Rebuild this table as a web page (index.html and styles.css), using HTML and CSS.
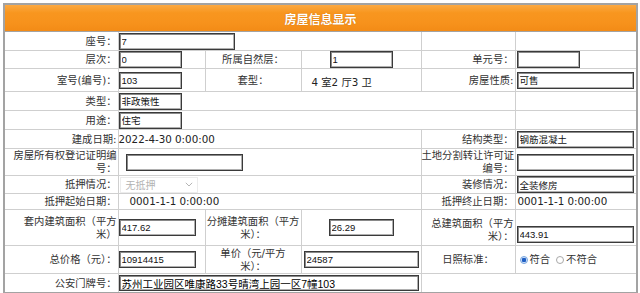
FILE: index.html
```html
<!DOCTYPE html>
<html lang="zh-CN">
<head>
<meta charset="utf-8">
<title>房屋信息显示</title>
<link rel="stylesheet" href="styles.css">
</head>
<body>
<div class="page">
<table class="info">
<colgroup>
<col class="c-a"><col class="c-b"><col class="c-c"><col class="c-d"><col class="c-e"><col class="c-f">
</colgroup>
<tr class="r-head"><th colspan="6"><span class="title">房屋信息显示</span></th></tr>
<tr class="h20">
  <td class="lbl">座号：</td>
  <td colspan="3" class="val"><input class="inp w116" value="7" readonly></td>
  <td></td><td></td>
</tr>
<tr class="h19">
  <td class="lbl">层次：</td>
  <td class="val"><input class="inp w63" value="0" readonly></td>
  <td class="mid">所属自然层：</td>
  <td class="mid"><input class="inp w63" value="1" readonly></td>
  <td class="lbl">单元号：</td>
  <td class="val"><input class="inp w63 ml1" value="" readonly></td>
</tr>
<tr class="h19">
  <td class="lbl">室号(编号)：</td>
  <td class="val"><input class="inp w63" value="103" readonly></td>
  <td class="mid">套型：</td>
  <td class="val txt-low">4 室2 厅3 卫</td>
  <td class="lbl">房屋性质:</td>
  <td class="val"><input class="inp w117 ml1" value="可售" readonly></td>
</tr>
<tr class="h20">
  <td class="lbl">类型：</td>
  <td colspan="4" class="val"><input class="inp w63" value="非政策性" readonly></td>
  <td></td>
</tr>
<tr class="h20">
  <td class="lbl">用途：</td>
  <td colspan="4" class="val"><input class="inp w63" value="住宅" readonly></td>
  <td></td>
</tr>
<tr class="h20">
  <td class="lbl tight">建成日期:</td>
  <td colspan="3" class="val">2022-4-30 0:00:00</td>
  <td class="lbl">结构类型：</td>
  <td class="val"><input class="inp w117 ml1" value="钢筋混凝土" readonly></td>
</tr>
<tr class="h27">
  <td class="lbl">房屋所有权登记证明编<br>号：</td>
  <td colspan="3" class="val"><input class="inp w117 ml7" value="" readonly></td>
  <td class="lbl">土地分割转让许可证<br>编号：</td>
  <td class="val"><input class="inp w117 ml1" value="" readonly></td>
</tr>
<tr class="h19">
  <td class="lbl">抵押情况：</td>
  <td colspan="3" class="val">
    <div class="sel-dis"><span>无抵押</span>
      <svg class="chev" viewBox="0 0 8 5" width="8" height="5"><path d="M0.8 0.8 L4 4 L7.2 0.8" fill="none" stroke="#b5b5b5" stroke-width="1"/></svg>
    </div>
  </td>
  <td class="lbl">装修情况：</td>
  <td class="val"><input class="inp w117 ml1" value="全装修房" readonly></td>
</tr>
<tr class="h17">
  <td class="lbl">抵押起始日期：</td>
  <td colspan="3" class="val pl11">0001-1-1 0:00:00</td>
  <td class="lbl">抵押终止日期：</td>
  <td class="val pl2">0001-1-1 0:00:00</td>
</tr>
<tr class="h33">
  <td class="lbl">套内建筑面积（平方<br>米）</td>
  <td class="val"><input class="inp w77" value="417.62" readonly></td>
  <td class="mid">分摊建筑面积（平方<br>米）：</td>
  <td class="mid"><input class="inp w65" value="26.29" readonly></td>
  <td class="lbl low">总建筑面积（平方<br>米）：</td>
  <td class="val bottom"><input class="inp w117 ml1" value="443.91" readonly></td>
</tr>
<tr class="h29">
  <td class="lbl">总价格（元）：</td>
  <td class="val"><input class="inp w77" value="10914415" readonly></td>
  <td class="mid">单价（元/平方<br>米）：</td>
  <td class="val"><input class="inp w115 ml2" value="24587" readonly></td>
  <td class="mid">日照标准：</td>
  <td class="val">
    <div class="radios">
      <span class="radio on"></span><span class="rtxt">符合</span>
      <span class="radio"></span><span class="rtxt">不符合</span>
    </div>
  </td>
</tr>
<tr class="h20">
  <td class="lbl">公安门牌号：</td>
  <td colspan="3" class="val"><input class="inp w300 big" value="苏州工业园区唯康路33号晴湾上园一区7幢103" readonly></td>
  <td colspan="2"></td>
</tr>
</table>
</div>
</body>
</html>
```

FILE: styles.css
```css
html, body {
  margin: 0;
  padding: 0;
  background: #ffffff;
}
body {
  font-family: "DejaVu Sans", "Noto Sans CJK SC", sans-serif;
  font-size: 10.3px;
  color: #333333;
}
.page {
  padding: 3px 0 0 3px;
}
.info {
  border-collapse: collapse;
  table-layout: fixed;
  width: 633px;
  border: 2px solid #a3a3a3;
}
.c-a { width: 114px; }
.c-b { width: 87px; }
.c-c { width: 96px; }
.c-d { width: 120px; }
.c-e { width: 94px; }
.c-f { width: 122px; }

.r-head th {
  height: 26px;
  padding: 0;
  border: 1px solid #a3a3a3;
  background: linear-gradient(#fca942 0%, #f8961f 30%, #f7921c 70%, #f38b16 100%);
  text-align: center;
  vertical-align: middle;
}
.title {
  color: #ffffff;
  font-family: "Noto Sans CJK SC", sans-serif;
  font-size: 12px;
  font-weight: bold;
  text-shadow: 0 0 1px rgba(160, 80, 0, 0.6);
}

.info td {
  border: 1px solid #cfcfcf;
  padding: 0;
  line-height: 13px;
  vertical-align: middle;
  white-space: nowrap;
}
.h17 td { height: 15px; }
.h19 td { height: 17px; }
.h20 td { height: 18px; }
.h27 td { height: 25px; }
.h29 td { height: 27px; }
.h33 td { height: 31px; }

.info td.lbl {
  text-align: right;
  padding-right: 1px;
}
.info td.tight { padding-right: 1px; }
.info td.mid { text-align: center; }
.info td.val { text-align: left; color: #222222; }
.info td.pl11 { padding-left: 11px; }
.info td.pl2 { padding-left: 2px; }
.info td.txt-low { padding-left: 10px; padding-top: 5px; }
.info td.low { padding-top: 4px; }
.info td.bottom { vertical-align: bottom; padding-bottom: 2px; }

.inp {
  display: block;
  box-sizing: border-box;
  height: 17px;
  margin: 0;
  padding: 0 2px;
  border: 1px solid #3a3a3a;
  box-shadow: inset 1px 1px 0 #8a8a8a, inset -1px -1px 0 #b0b0b0;
  background: #ffffff;
  font-family: "Liberation Sans", "Noto Sans CJK SC", sans-serif;
  font-size: 9.5px;
  color: #111111;
  outline: none;
}
.mid .inp { margin: 0 auto; }
.inp.big { font-size: 10.5px; height: 16px; color: #000000; }
.w63 { width: 63px; }
.w65 { width: 65px; }
.w77 { width: 77px; }
.w115 { width: 115px; }
.w116 { width: 116px; }
.w117 { width: 117px; }
.w300 { width: 300px; }
.ml1 { margin-left: 1px; }
.ml2 { margin-left: 2px; }
.ml7 { margin-left: 7px; }
.mid .inp.w63 { margin: 0 auto; }

.sel-dis {
  box-sizing: border-box;
  width: 78px;
  height: 16px;
  margin-left: 1px;
  padding: 0 4px 0 5px;
  display: flex;
  align-items: center;
  justify-content: space-between;
  border: 1px solid #ececec;
  color: #b3b3b3;
  font-size: 10px;
  font-family: "Noto Sans CJK SC", sans-serif;
}
.chev { display: block; }

.radios {
  display: flex;
  align-items: center;
  padding-left: 4px;
  font-size: 10.3px;
}
.radio {
  box-sizing: border-box;
  width: 8px;
  height: 8px;
  border-radius: 50%;
  border: 1px solid #a8a8a8;
  background: #ffffff;
  margin-right: 2px;
}
.radio.on {
  border: 1px solid #7aa7e0;
  background: radial-gradient(circle, #1f5fc4 0, #1f5fc4 2px, #cfe0f7 2.5px);
}
.rtxt { margin-right: 6px; color: #333333; }
```
